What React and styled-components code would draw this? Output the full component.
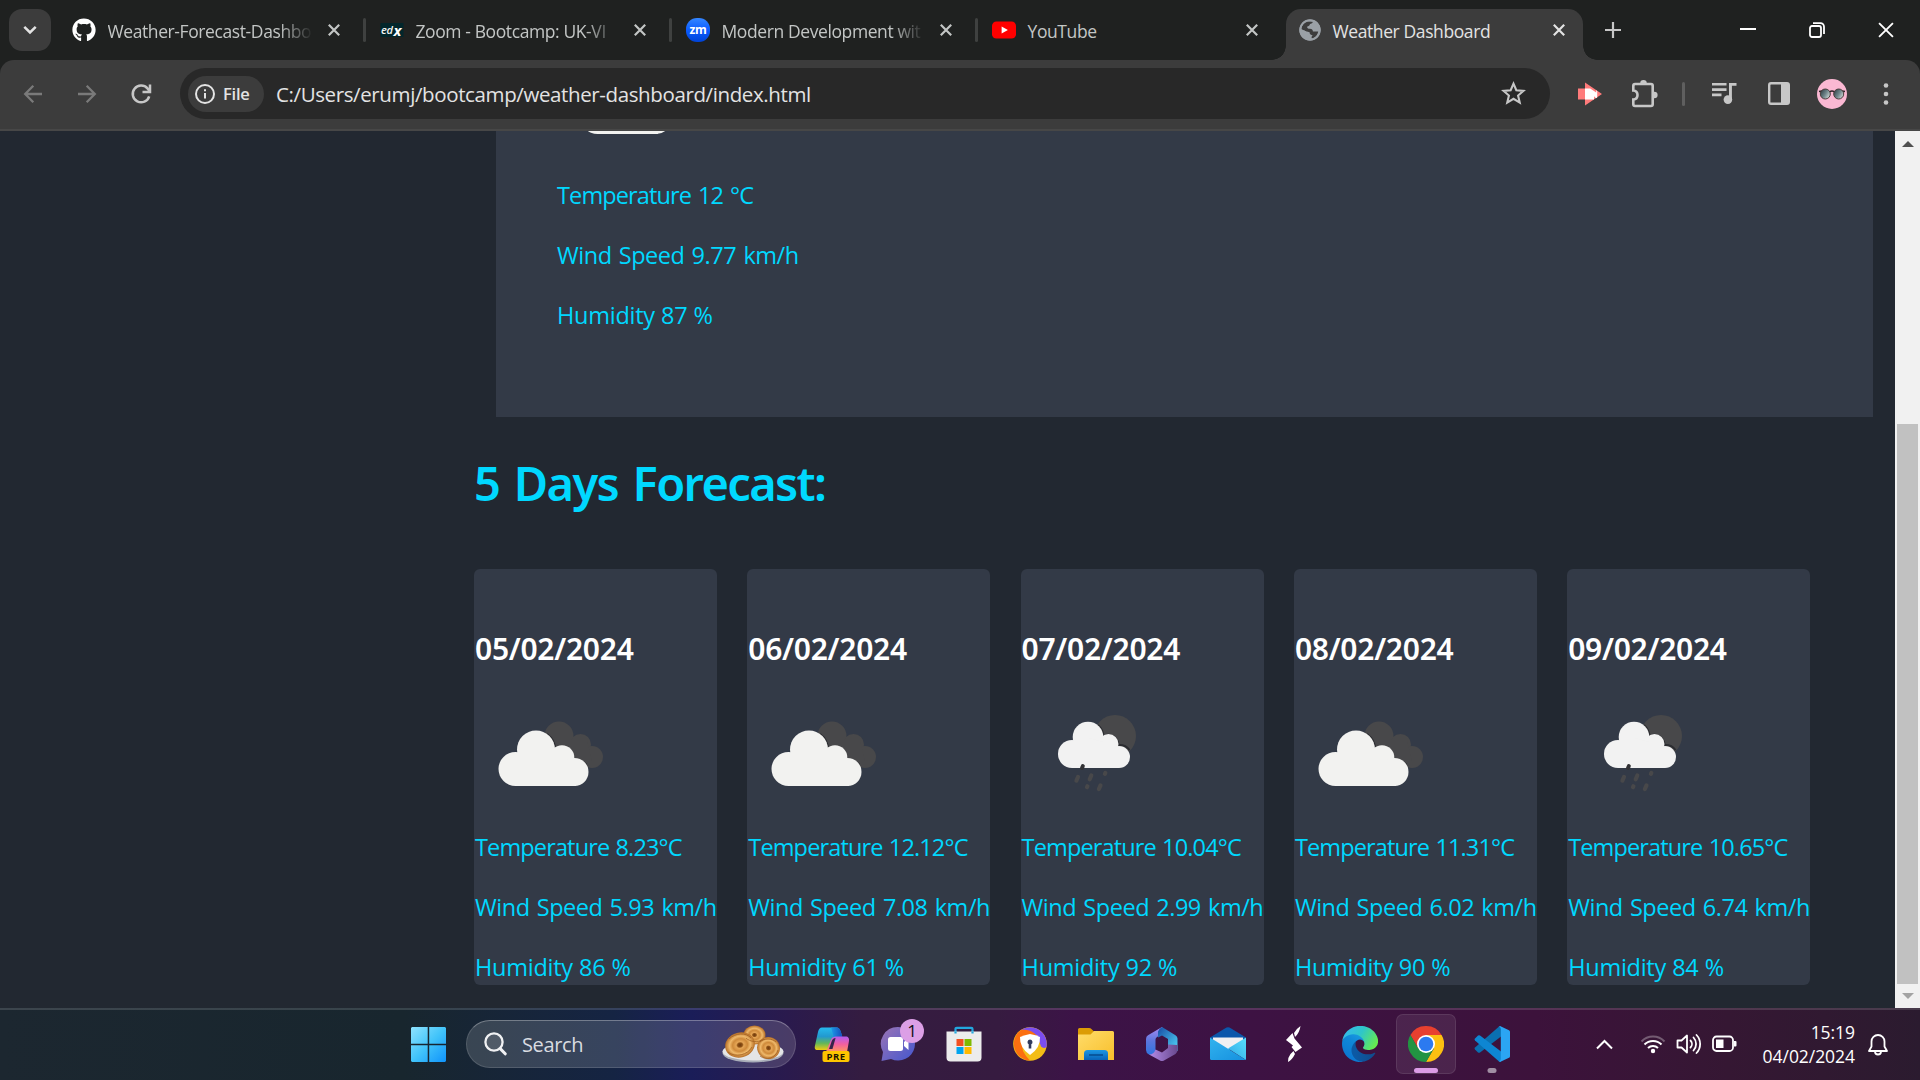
import React from "react";
import styled, { createGlobalStyle } from "styled-components";
import { FaGithub } from "react-icons/fa";

const GlobalStyle = createGlobalStyle`
  *, *::before, *::after { box-sizing: border-box; }
  html, body { margin: 0; padding: 0; overflow: hidden; background: #222831; }
  body { font-family: "Open Sans", "Noto Sans", sans-serif; }
  h2, h3, p { margin: 0; font-weight: 400; }
  button { border: 0; padding: 0; background: none; color: inherit; font: inherit; }
  svg { display: block; flex: none; }
`;

const Screen = styled.div`
  width: 1920px;
  height: 1080px;
  display: flex;
  flex-direction: column;
  overflow: hidden;
`;

/* ---------- Browser tab strip ---------- */

const TabStrip = styled.header`
  height: 60px;
  flex: none;
  display: flex;
  align-items: flex-end;
  padding-left: 9px;
  background: #1f2120;
  color: #c3c6c5;
`;

const TabSearchButton = styled.button`
  width: 42px;
  height: 42px;
  margin: 0 8px 9px 0;
  border-radius: 13px;
  background: #3c3c3c;
  display: grid;
  place-items: center;
`;

const Tab = styled.div`
  width: ${(p) => (p.$active ? 297 : 306)}px;
  height: 51px;
  margin-left: ${(p) => (p.$active ? "3px" : "0")};
  padding: 0 ${(p) => (p.$active ? 18 : 25)}px 9px ${(p) => (p.$active ? 13 : p.$first ? 13 : 15)}px;
  display: flex;
  align-items: center;
  gap: 11.5px;
  position: relative;
  border-radius: 15px 15px 0 0;
  background: ${(p) => (p.$active ? "#3c3c3c" : "transparent")};
  color: ${(p) => (p.$active ? "#e3e3e3" : "#c3c6c5")};

  &::before, &::after {
    content: "";
    display: ${(p) => (p.$active ? "block" : "none")};
    position: absolute;
    bottom: 0;
    width: 14px;
    height: 14px;
  }
  &::before {
    left: -14px;
    background: radial-gradient(circle at 0 0, transparent 13.5px, #3c3c3c 14px);
  }
  &::after {
    right: -14px;
    background: radial-gradient(circle at 100% 0, transparent 13.5px, #3c3c3c 14px);
  }
`;

const TabTitle = styled.span`
  flex: 1;
  min-width: 0;
  height: 25px;
  margin: 2px 4px 0 0;
  white-space: nowrap;
  font-size: 17.5px;
  line-height: 25px;
  letter-spacing: -0.4px;
  -webkit-mask-image: ${(p) => (p.$fade ? "linear-gradient(90deg, #000 calc(100% - 34px), transparent)" : "none")};
  mask-image: ${(p) => (p.$fade ? "linear-gradient(90deg, #000 calc(100% - 34px), transparent)" : "none")};
`;

const TabDivider = styled.span`
  width: 3px;
  height: 24px;
  margin: 0 -1px 18px -2px;
  border-radius: 2px;
  background: #3f4140;
`;

const NewTabButton = styled.button`
  width: 42px;
  height: 42px;
  margin: 0 0 9px 9px;
  display: grid;
  place-items: center;
`;

const WindowControls = styled.div`
  height: 60px;
  margin-left: auto;
  display: flex;
  color: #fff;
`;

const WindowButton = styled.button`
  width: 69px;
  height: 60px;
  display: grid;
  place-items: center;
`;

/* ---------- Browser toolbar ---------- */

const ToolbarBack = styled.div`
  flex: none;
  background: #1f2120;
`;

const Toolbar = styled.nav`
  height: 71px;
  display: flex;
  align-items: center;
  padding: 0 18px 2px 18px;
  border-bottom: 2px solid #474747;
  border-radius: 14px 14px 0 0;
  background: #3c3c3c;
  color: #c7c7c7;
`;

const NavButton = styled.button`
  width: 30px;
  height: 30px;
  margin-right: ${(p) => p.$gap}px;
  display: grid;
  place-items: center;
  color: ${(p) => (p.$disabled ? "#7a7a7a" : "#c7c7c7")};
`;

const Omnibox = styled.div`
  width: 1371px;
  height: 51px;
  padding: 0 24px 0 8px;
  display: flex;
  align-items: center;
  border-radius: 26px;
  background: #282828;
`;

const SiteChip = styled.span`
  width: 76px;
  height: 36px;
  padding-left: 7px;
  display: flex;
  align-items: center;
  gap: 8px;
  border-radius: 18px;
  background: #3c3c3c;
  color: #e3e3e3;
  font-size: 16.5px;
  font-weight: 600;
  letter-spacing: -0.2px;
`;

const Url = styled.span`
  flex: 1;
  margin-left: 12px;
  color: #e3e3e3;
  font-size: 20.5px;
  line-height: 30px;
  letter-spacing: -0.38px;
`;

const ToolbarActions = styled.div`
  margin-left: 27px;
  display: grid;
  grid-template-columns: 54px 51px 30px 56px 49px 53px 32px;
  align-items: center;
`;

const ToolbarDivider = styled.span`
  width: 3px;
  height: 24px;
  border-radius: 2px;
  background: #5f5f5f;
`;

const TrailingMenu = styled.span`
  margin-left: 13px;
`;

/* ---------- Page ---------- */

const Viewport = styled.div`
  height: 877px;
  flex: none;
  display: flex;
  background: #222831;
`;

const Sidebar = styled.aside`
  width: 474px;
  flex: none;
`;

const Content = styled.main`
  width: 1421px;
  flex: none;
`;

const CurrentPanel = styled.section`
  width: 1377px;
  height: 286px;
  margin-left: 22px;
  padding: 0 61px 84px;
  display: flex;
  flex-direction: column;
  justify-content: flex-end;
  gap: 24px;
  overflow: hidden;
  background: #333a47;
`;

const Metric = styled.p`
  color: #00d8ff;
  font-size: 23.5px;
  line-height: 36px;
  letter-spacing: ${(p) => p.$spacing}px;
  word-spacing: ${(p) => p.$words || 0}px;
  white-space: nowrap;
`;

const ForecastTitle = styled.h2`
  height: 58px;
  margin: 37px 0 57px;
  color: #00d8ff;
  font-family: "Noto Sans", sans-serif;
  font-size: 47px;
  font-weight: 600;
  line-height: 59px;
  letter-spacing: -1.65px;
  word-spacing: 4px;
`;

const Cards = styled.div`
  display: grid;
  grid-template-columns: repeat(5, 243px);
  gap: 30.3px;
`;

const Card = styled.article`
  height: 416px;
  padding: 57px 0 0 1px;
  display: flex;
  flex-direction: column;
  border-radius: 6px;
  background: #333a47;
`;

const CardDate = styled.h3`
  margin-bottom: 9px;
  color: #fff;
  font-family: "Noto Sans", sans-serif;
  font-size: 30px;
  font-weight: 600;
  line-height: 46px;
  height: 45px;
  letter-spacing: -0.27px;
`;

const Metrics = styled.div`
  margin-top: 24px;
  display: flex;
  flex-direction: column;
  gap: 24px;
`;

const Scrollbar = styled.div`
  width: 25px;
  padding: 0 2px;
  display: flex;
  flex-direction: column;
  background: #f1f1f1;
`;

const ScrollArrow = styled.div`
  height: ${(p) => p.$h}px;
  display: grid;
  place-items: center;
`;

const ScrollThumb = styled.div`
  height: 560px;
  margin-top: ${(p) => p.$offset}px;
  background: #c1c1c1;
`;

/* ---------- Taskbar ---------- */

const Taskbar = styled.footer`
  height: 72px;
  flex: none;
  padding-left: 411px;
  display: flex;
  align-items: center;
  border-top: 2px solid rgba(255, 255, 255, 0.14);
  background: linear-gradient(90deg, #1c2730 0%, #18262e 21%, #152443 32%, #1a1d58 36%, #2a1a4d 41%, #341c40 45%, #361b40 52%, #3c1347 56%, #3d1243 65%, #3c123b 80%, #351733 90%, #2b1b2f 100%);
  background-origin: border-box;
  color: #fff;
`;

const StartButton = styled.div`
  margin-top: -1px;
`;

const SearchBox = styled.div`
  width: 330px;
  height: 48px;
  margin: -2px 3px 0 20px;
  padding: 0 11px 0 17px;
  display: flex;
  align-items: center;
  border: 1.5px solid rgba(255, 255, 255, 0.13);
  border-top-color: rgba(255, 255, 255, 0.3);
  border-radius: 24px;
  background: rgba(255, 255, 255, 0.15);
`;

const SearchText = styled.span`
  flex: 1;
  margin: 0 0 0 15px;
  color: #d9dce1;
  font-size: 20px;
  letter-spacing: -0.35px;
`;

const TaskButton = styled.div`
  width: 60px;
  height: 60px;
  margin: -2px 3px 0;
  display: grid;
  place-items: center;
  position: relative;
  border-radius: 7px;
  border: ${(p) => (p.$active ? "1.5px solid rgba(255,255,255,.09)" : "0")};
  background: ${(p) => (p.$active ? "rgba(255,255,255,.08)" : "transparent")};
`;

const Indicator = styled.span`
  position: absolute;
  bottom: ${(p) => (p.$wide ? 0 : 1)}px;
  left: 50%;
  width: ${(p) => (p.$wide ? 24 : 9)}px;
  height: 5px;
  transform: translateX(-50%);
  border-radius: 3px;
  background: ${(p) => (p.$wide ? "#dc9ce6" : "#a08ea3")};
`;

const Badge = styled.span`
  position: absolute;
  top: 5px;
  right: 4px;
  width: 24px;
  height: 24px;
  border-radius: 50%;
  background: #dc9fe6;
  color: #111;
  font-size: 17px;
  line-height: 24px;
  text-align: center;
`;

const Tray = styled.div`
  margin: -2px 32px 0 auto;
  display: flex;
  align-items: center;
`;

const TrayItem = styled.span`
  margin-right: ${(p) => p.$gap}px;
`;

const Clock = styled.div`
  width: 96px;
  margin: -1px 13px 0 0;
  text-align: right;
  font-size: 17.5px;
  line-height: 24px;
  letter-spacing: -0.05px;
  white-space: nowrap;
`;

/* ---------- Drawings ---------- */

const CloseIcon = ({ size = 12, width = 2.2 }) => (
  <svg width={size} height={size} viewBox="0 0 12 12" fill="none" stroke="currentColor" strokeWidth={width}>
    <path d="M.8.8l10.4 10.4M11.2.8L.8 11.2" />
  </svg>
);

const EdxIcon = () => (
  <svg width="24" height="24" viewBox="0 0 24 24">
    <rect x="0.5" y="5" width="23" height="14" fill="#02262b" />
    <text x="1" y="15.5" fontFamily="Open Sans" fontWeight="600" fontStyle="italic" fontSize="11" letterSpacing="-.4" fill="#f3f5f5">ed</text>
    <text x="13.5" y="18" fontFamily="Open Sans" fontWeight="700" fontStyle="italic" fontSize="15" fill="#fff">x</text>
  </svg>
);

const ZoomIcon = () => (
  <svg width="24" height="24" viewBox="0 0 24 24">
    <defs><linearGradient id="zm" x2="0" y2="1"><stop stopColor="#3486ff" /><stop offset=".5" stopColor="#0b5cff" /><stop offset="1" stopColor="#0043d6" /></linearGradient></defs>
    <rect width="24" height="24" rx="11" fill="url(#zm)" />
    <text x="12" y="15.6" textAnchor="middle" fontFamily="Open Sans" fontWeight="700" fontSize="12" letterSpacing="-.4" fill="#fff">zm</text>
  </svg>
);

const YouTubeIcon = () => (
  <svg width="24" height="24" viewBox="0 0 24 24">
    <rect y="3.4" width="24" height="17.2" rx="4.4" fill="#f00" />
    <path d="M9.6 8.4v7.2l6.3-3.6z" fill="#fff" />
  </svg>
);

const GlobeIcon = () => (
  <svg width="22" height="22" viewBox="0 0 22 22">
    <circle cx="11" cy="11" r="10.6" fill="#9aa0a6" />
    <path d="M8 2.3c2 .3 4.5 0 6 .1-.3 1.7-1.6 1.9-3 2.6-.2 1.8-1.4 2.3-3 2.7.4 1.6.8 2 2.8 2 2.2 0 3.1 1.3 3.1 2.7 1.5.2 3.6.1 5.4.2a8.7 8.7 0 0 1-6.4 6.9c-.6-1.2-.3-2.3.8-3.2-1.6-.4-3.1-.7-3.1-3 -2-.4-5.500-1.100-8.200-3.200 .5-3.900 2.700-6.600 5.600-7.800z" fill="#3c3c3c" />
    <path d="M2.300 11c2.100.2 4.500.5 5.200 2.200.6 1.800 2.800 1.900 3 3.500.1 1.100-.3 2-.6 3.100-4.200-.5-7.400-4.200-7.600-8.800z" fill="#9aa0a6" />
    <circle cx="11" cy="11" r="9.8" fill="none" stroke="#9aa0a6" strokeWidth="1.9" />
  </svg>
);

const ArrowIcon = ({ right }) => (
  <svg width="20" height="20" viewBox="0 0 20 20" fill="none" stroke="currentColor" strokeWidth="2.3" transform={right ? "scale(-1 1)" : undefined}>
    <path d="M19 10H2.500M10.300 1.800L2.200 10l8.100 8.200" />
  </svg>
);

const ReloadIcon = () => (
  <svg width="22" height="22" viewBox="0 0 22 22" fill="none" stroke="currentColor" strokeWidth="2.5">
    <path d="M19.200 13.300A8.400 8.400 0 1 1 17.500 5.400L19.500 8" />
    <path d="M20 1.500V8.900h-7.500" />
  </svg>
);

const StarIcon = () => (
  <svg width="25" height="25" viewBox="0 0 24 24" fill="none" stroke="#c7c7c7" strokeWidth="2">
    <path d="M12 2.600l2.700 6.300 6.900.6-5.200 4.500 1.600 6.700-6-3.600-6 3.600 1.600-6.700-5.200-4.500 6.900-.6z" />
  </svg>
);

const RecorderIcon = () => (
  <svg width="25" height="24" viewBox="0 0 25 24">
    <path d="M1 6.500h7V0.500L25 12 8 23.500v-6H1z" fill="#ff7b7b" />
    <path d="M8 6.500h5.200l6 4V8.300l1 .8v6.500l-1.200.6-2-2v3.300H8z" fill="#fff" />
  </svg>
);

const PuzzleIcon = () => (
  <svg width="27" height="30" viewBox="0 0 27 30">
    <circle cx="12.500" cy="4.300" r="3.300" fill="#c7c7c7" />
    <circle cx="23.300" cy="16" r="3.300" fill="#c7c7c7" />
    <path d="M4 5h16a1.700 1.700 0 0 1 1.700 1.700v18.600A1.700 1.700 0 0 1 20 27H4a1.700 1.700 0 0 1-1.700-1.700V20.500c2.600-.2 4.200-2 4.200-4.500s-1.600-4.300-4.200-4.500V6.700A1.700 1.700 0 0 1 4 5z" fill="#3c3c3c" stroke="#c7c7c7" strokeWidth="2.600" />
  </svg>
);

const PlaylistIcon = () => (
  <svg width="25" height="23" viewBox="0 0 25 23" fill="#c7c7c7">
    <path d="M0 1h14.500v2.600H0zM0 6.300h14.500v2.600H0zM0 11.600h9.500v2.600H0zM17 1h7.500v2.800h-4.600V18H17z" />
    <circle cx="15.900" cy="17.600" r="4.300" />
  </svg>
);

const SidePanelIcon = () => (
  <svg width="22" height="23" viewBox="0 0 22 23">
    <rect x="1.200" y="1.200" width="19.600" height="20.600" rx="1.800" fill="none" stroke="#c7c7c7" strokeWidth="2.400" />
    <path d="M13 1h8v21h-8z" fill="#c7c7c7" />
  </svg>
);

const AvatarIcon = () => (
  <svg width="30" height="30" viewBox="0 0 30 30">
    <defs><linearGradient id="lens" x1="0" y1="0" x2="1" y2=".6"><stop stopColor="#26343b" /><stop offset=".6" stopColor="#71878c" /><stop offset="1" stopColor="#c6d0cf" /></linearGradient></defs>
    <circle cx="15" cy="15" r="15" fill="#fbb8d3" />
    <path d="M2 12.500l3-.5M28 12.500l-3-.5M12.500 13q2.500-1.800 5 0" stroke="#2b2226" strokeWidth="1.500" fill="none" />
    <circle cx="8.300" cy="15" r="5" fill="url(#lens)" stroke="#4b3d3c" strokeWidth="1" />
    <circle cx="21.700" cy="15" r="5" fill="url(#lens)" stroke="#4b3d3c" strokeWidth="1" />
  </svg>
);

const MenuDots = () => (
  <svg width="6" height="22" viewBox="0 0 6 22" fill="#c7c7c7">
    <circle cx="3" cy="2.500" r="2.300" /><circle cx="3" cy="11" r="2.300" /><circle cx="3" cy="19.500" r="2.300" />
  </svg>
);

const CloudyIcon = () => (
  <svg width="150" height="125" viewBox="0 0 150 125">
    <g fill="#48484a"><circle cx="84" cy="56" r="14.500" /><circle cx="105.500" cy="64.500" r="10.500" /><circle cx="117" cy="77" r="11" /><path d="M76 60h36l5 22H80z" /></g>
    <g fill="none" stroke="#2c2d31" strokeWidth="2"><path d="M72 54q8 6 8 15 8-4 14 1 4 4 4.500 9 8 0 13 6" /></g>
    <g fill="#f2f2f0"><circle cx="40.500" cy="89" r="17" /><circle cx="61" cy="69.500" r="19" /><circle cx="87" cy="77.500" r="12.300" /><circle cx="99.500" cy="92" r="14" /><path d="M44 70h18l18 4 16 8 5 24H40.500z" /></g>
  </svg>
);

const RainIcon = () => (
  <svg width="150" height="125" viewBox="0 0 150 125">
    <circle cx="93" cy="56" r="21" fill="#48484a" />
    <g fill="none" stroke="#2c2d31" strokeWidth="2"><path d="M76 45q5 5 5.500 11 6-3 11 1 4 4 4 8 7-.5 11 5" /></g>
    <g fill="#f2f2f2"><circle cx="50" cy="74" r="14" /><circle cx="66" cy="57" r="15.300" /><circle cx="86.500" cy="64" r="10" /><circle cx="97" cy="77" r="11" /><path d="M52 58h15l14 4 12 6 4 20H50z" /></g>
    <path d="M60.800 86.200l-.8 1.800" stroke="#323235" strokeWidth="4" strokeLinecap="round" />
    <path d="M56 97l-1.600 3.600M69.300 95.500l-1.600 3.800M83.300 93l-.4.900M65.400 106.300l-.4.900M78.500 105.400l-1.600 3.600" stroke="#48484a" strokeWidth="4.200" strokeLinecap="round" />
  </svg>
);

const StartIcon = () => (
  <svg width="35" height="35" viewBox="0 0 35 35">
    <defs><linearGradient id="win" gradientUnits="userSpaceOnUse" x1="0" y1="0" x2="35" y2="35"><stop stopColor="#8fe3ff" /><stop offset=".5" stopColor="#42c4fa" /><stop offset="1" stopColor="#0f93fb" /></linearGradient></defs>
    <path fill="url(#win)" d="M1 0h15.700v16.700H0V1zM18.200 0H34l1 1v15.700H18.200zM0 18.200h16.700V35H1l-1-1zM18.200 18.200H35V34l-1 1H18.200z" />
  </svg>
);

const MagnifierIcon = () => (
  <svg width="23" height="24" viewBox="0 0 23 24" fill="none" stroke="#f0f1f3" strokeWidth="2.300" strokeLinecap="round">
    <circle cx="10" cy="10" r="8.600" fill="rgba(255,255,255,.12)" /><path d="M16.200 16.600l5 5.200" strokeWidth="3" />
  </svg>
);

const PastryIcon = () => (
  <svg width="62" height="38" viewBox="0 0 62 38">
    <defs><radialGradient id="bun"><stop stopColor="#6b380d" /><stop offset=".16" stopColor="#8f5216" /><stop offset=".26" stopColor="#e5a656" /><stop offset=".5" stopColor="#cf8a3a" /><stop offset=".7" stopColor="#efb96b" /><stop offset="1" stopColor="#b56d25" /></radialGradient></defs>
    <ellipse cx="31" cy="28" rx="30.500" ry="9.500" fill="#a8adb8" />
    <ellipse cx="31" cy="26.500" rx="30.500" ry="9" fill="#e4e5e6" />
    <ellipse cx="32.500" cy="10" rx="11" ry="9.500" fill="url(#bun)" />
    <ellipse cx="18" cy="20" rx="15" ry="12.500" fill="url(#bun)" transform="rotate(-15 18 20)" />
    <ellipse cx="46.500" cy="23" rx="11.500" ry="11" fill="url(#bun)" transform="rotate(25 46.500 23)" />
    <g fill="none" stroke="#9c5b1c" strokeWidth=".9" opacity=".8">
      <path d="M6 27c7 6 20 3 24-5M7 14c6-6 17-7 22-1M24 13c4 4 12 5 18 1M38 31c6 5 16 2 18-6M38 17c4-4 12-4 16 0" />
    </g>
  </svg>
);

const CopilotIcon = () => (
  <svg width="36" height="36" viewBox="0 0 36 36">
    <defs>
      <linearGradient id="cpA" x2="0" y2="1"><stop stopColor="#26b9ee" /><stop offset=".4" stopColor="#2299cf" /><stop offset=".7" stopColor="#62b65a" /><stop offset="1" stopColor="#f0cc12" /></linearGradient>
      <linearGradient id="cpB" x2="0" y2="1"><stop stopColor="#b35cf0" /><stop offset=".5" stopColor="#f2609f" /><stop offset="1" stopColor="#ff9a5a" /></linearGradient>
      <linearGradient id="cpC"><stop stopColor="#1c9be8" /><stop offset="1" stopColor="#164bbd" /></linearGradient>
    </defs>
    <path d="M8 1.500h14c3 0 4 1.500 5 5l1.300 4h-5c-2.800 0-4.300 1.600-5.200 4.700L15 24H3.500C.8 24 .4 22 1 19.500L4 6c.8-3 1.800-4.500 4-4.500z" fill="url(#cpA)" />
    <path d="M17 1.500h5c3 0 4 1.500 5 5l1.300 4h-5c-1.500 0-2.600.5-3.500 1.400L18 5c-.4-1.700-.8-2.800-1-3.500z" fill="url(#cpC)" />
    <path d="M25 10.500h6.500c3 0 4 2 3.400 5L33 26H9c2 0 3.500-.6 4.300-3l3.500-9c1-2.600 3-3.500 5.200-3.500z" fill="url(#cpB)" />
    <path d="M15 23l2.600-7.500c.8-2.200 1.800-3.200 4-3.500L18.500 23z" fill="#36234a" />
    <rect x="8.500" y="25" width="27" height="11" rx="2" fill="#fdc500" />
    <text x="22" y="34" textAnchor="middle" fontFamily="Open Sans" fontWeight="700" fontSize="9.500" letterSpacing=".5" fill="#1d1600">PRE</text>
  </svg>
);

const ChatIcon = () => (
  <svg width="36" height="36" viewBox="0 0 36 36">
    <defs><linearGradient id="chat" x2="1" y2="1"><stop stopColor="#9b74b5" /><stop offset="1" stopColor="#4457cf" /></linearGradient></defs>
    <path d="M18 1a16.800 16.800 0 1 1-7 32L1.500 35 3 26A16.800 16.800 0 0 1 18 1z" fill="url(#chat)" />
    <rect x="8" y="11" width="15" height="14" rx="2.500" fill="#fff" />
    <path d="M24 16l4.500-4v12L24 20z" fill="#fff" />
  </svg>
);

const StoreIcon = () => (
  <svg width="36" height="36" viewBox="0 0 36 36">
    <path d="M9.500 7.500V3q0-1.200 1.200-1.200h14.600q1.200 0 1.200 1.200v4.500" fill="none" stroke="#22a7de" strokeWidth="2.200" />
    <path d="M.5 5.500h35v26a4 4 0 0 1-4 4h-27a4 4 0 0 1-4-4z" fill="#ececec" />
    <path d="M9.500 5.500v2M26.500 5.500v2" stroke="#22a7de" strokeWidth="2.200" />
    <path d="M10.500 13h7v7h-7z" fill="#f25022" /><path d="M18.500 13h7v7h-7z" fill="#7fba00" />
    <path d="M10.500 21h7v7h-7z" fill="#00a4ef" /><path d="M18.500 21h7v7h-7z" fill="#ffb900" />
  </svg>
);

const SecureBrowserIcon = () => (
  <svg width="36" height="36" viewBox="0 0 36 36">
    <circle cx="18" cy="18" r="16.800" fill="#f3bd16" />
    <path d="M18 1.200A16.800 16.800 0 0 1 34.500 21q-3 2-5.500-.5L25 9 12 7.500 9 4q4-2.800 9-2.800z" fill="#7b4df0" />
    <path d="M9 4C16 3 22 6 25 10L9 12l2 13q3 6 7 9.500A16.800 16.800 0 0 1 9 4z" fill="#fb6f10" />
    <path d="M8 11q5-2 10-3 6 .8 10 3 .5 11-10 18Q7.500 22 8 11z" fill="#fff" />
    <path d="M18 13.500a2.600 2.600 0 0 1 1.300 4.800V22.500h-2.600v-4.200A2.600 2.600 0 0 1 18 13.500z" fill="#313a5c" />
  </svg>
);

const FolderIcon = () => (
  <svg width="36" height="36" viewBox="0 0 36 36">
    <defs><linearGradient id="fold" x2="1" y2="1"><stop stopColor="#ffdc6a" /><stop offset="1" stopColor="#f8bf2b" /></linearGradient><linearGradient id="foldB" x2="0" y2="1"><stop stopColor="#1c97e3" /><stop offset="1" stopColor="#0863b9" /></linearGradient></defs>
    <path d="M0 3.500Q0 2 1.500 2h9.500q1.500 0 2.700 1.200L16.500 6v5H0z" fill="#dc9c05" />
    <path d="M0 8.500h12.500L16 5h18.500Q36 5 36 6.500V34H0z" fill="url(#fold)" />
    <path d="M6 34V27.500Q6 24 9.500 24h17q3.500 0 3.500 3.500V34z" fill="url(#foldB)" />
    <path d="M11 29h14" stroke="#064b8f" strokeWidth="1.500" />
  </svg>
);

const OfficeIcon = () => (
  <svg width="36" height="36" viewBox="0 0 36 36">
    <defs>
      <linearGradient id="ofA" x2="0" y2="1"><stop stopColor="#a68af2" /><stop offset=".5" stopColor="#5b76dd" /><stop offset="1" stopColor="#2f74df" /></linearGradient>
      <linearGradient id="ofB" x2="1" y2="1"><stop stopColor="#164aa3" /><stop offset="1" stopColor="#52d9fb" /></linearGradient>
      <linearGradient id="ofC"><stop stopColor="#b48be8" /><stop offset="1" stopColor="#68498e" /></linearGradient>
    </defs>
    <path d="M18 1L4 9.200Q2 10.500 2 13v11q0 3 3 4.600 4 1 6.500-2.600V13.500Q11.500 12 13 11l7-4Q20 3 18 1z" fill="url(#ofA)" />
    <path d="M18 1q-3 1.500-4 4.500v6L18 9.500l6 3.500v9l9.500 3V12.500q0-2-2-3.300z" fill="url(#ofB)" />
    <path d="M5 28.600l11 6q2 1 4 0L31.500 28q2-1.300 2-4v-5L24 18.500V22l-6 4.500-6.500-3Q10 28.500 5 28.600z" fill="url(#ofC)" />
  </svg>
);

const MailIcon = () => (
  <svg width="36" height="36" viewBox="0 0 36 36">
    <defs><linearGradient id="mailA" x2="1" y2="1"><stop stopColor="#32b3ee" /><stop offset="1" stopColor="#1590df" /></linearGradient><linearGradient id="mailB" x1="1" y1="0" x2="0" y2="1"><stop stopColor="#58ddfc" /><stop offset="1" stopColor="#2fa9e6" /></linearGradient></defs>
    <path d="M0 11.500L16.500 1.600q1.500-.8 3 0L36 11.500 18 25z" fill="#0b57ab" />
    <path d="M3 11.500h30v4L18 24 3 15.500z" fill="#f0f0f2" />
    <path d="M36 11.500V34L18 22.500z" fill="url(#mailB)" />
    <path d="M0 11.500L36 34H1.500Q0 34 0 32.500z" fill="url(#mailA)" />
  </svg>
);

const SwiftIcon = () => (
  <svg width="36" height="36" viewBox="0 0 36 36" fill="#fff">
    <path d="M24.500 0q-1 7-5.500 11l-1-4Q20 3 24.500 0zM16.500 7l2 5.500L26 21.500 19.500 26 15.500 21 17 19.500 10 14zM17.500 25l1.500 3Q16 34 12 36q0-5 2.500-8z" />
  </svg>
);

const EdgeIcon = () => (
  <svg width="36" height="36" viewBox="0 0 256 256">
    <defs>
      <linearGradient id="egA" x1=".2" x2="1"><stop stopColor="#0c59a4" /><stop offset="1" stopColor="#114a8b" /></linearGradient>
      <linearGradient id="egB" x1=".8" y1="0" x2=".3" y2="1"><stop stopColor="#1b9de2" /><stop offset=".4" stopColor="#0f86d8" /><stop offset="1" stopColor="#0b74cf" /></linearGradient>
      <linearGradient id="egC" x1="0" y1=".2" x2="1" y2=".6"><stop stopColor="#35b8f1" /><stop offset=".5" stopColor="#2fc6c8" /><stop offset="1" stopColor="#66eb4f" /></linearGradient>
    </defs>
    <path fill="url(#egA)" d="M231 190.500c-3.400 1.800-6.900 3.400-10.500 4.700a101.500 101.500 0 0 1-35.900 6.400c-47.300 0-88.500-32.500-88.500-74.300 0-11.400 6.400-21.900 16.400-27.300-42.800 1.800-53.800 46.400-53.800 72.500 0 74 68.100 81.400 82.800 81.400 7.900 0 19.800-2.300 27-4.600l1.300-.4a128.300 128.300 0 0 0 66.600-52.800 4 4 0 0 0-5.400-5.600z" />
    <path fill="url(#egB)" d="M105.700 241.400a79.200 79.200 0 0 1-22.700-21.300 80.700 80.700 0 0 1 29.500-120c3.200-1.500 8.500-4.100 15.600-4a32.400 32.400 0 0 1 25.700 13 31.900 31.900 0 0 1 6.300 18.700c0-.2 24.500-79.600-80-79.600-43.900 0-80 41.600-80 78.200 0 19.300 4.200 38.500 12.100 56.100a128 128 0 0 0 156.400 67 75.500 75.500 0 0 1-62.800-8z" />
    <path fill="url(#egC)" d="M152.300 148.900c-.9 1-3.400 2.500-3.400 5.600 0 2.600 1.700 5.200 4.800 7.300 14.400 10.100 41.700 8.700 41.800 8.700 10.700 0 21.200-2.900 30.500-8.300a61.800 61.800 0 0 0 30.500-53.300c.3-22.400-8-37.300-11.300-43.900C223.900 23.200 177.700-.9 127.500-.9A128 128 0 0 0-.5 125.300c.5-36.500 36.800-66 80-66 3.500 0 23.500.3 42 10.100 16.300 8.600 24.900 18.900 30.800 29.200 6.200 10.600 7.300 24.100 7.300 29.400 0 5.400-2.700 13.300-7.300 20.900z" />
  </svg>
);

const ChromeIcon = () => (
  <svg width="36" height="36" viewBox="0 0 36 36">
    <path d="M2.410 9A18 18 0 0 1 33.590 9H18v9l-7.800 4.500z" fill="#e8402f" />
    <path d="M33.590 9A18 18 0 0 1 18 36l7.800-13.500L18 18V9z" fill="#fcc011" />
    <path d="M18 36A18 18 0 0 1 2.410 9l7.790 13.500L18 18l7.800 4.500z" fill="#229342" />
    <circle cx="18" cy="18" r="9" fill="#fff" /><circle cx="18" cy="18" r="7.300" fill="#2c7af0" />
  </svg>
);

const CodeIcon = () => (
  <svg width="36" height="36" viewBox="0 0 36 36">
    <path d="M1 23.500l3 2.900q1 .8 2 .1L27 10.500V0l-2.500 1L1 21.500q-1 1 0 2z" fill="#0a6fb0" />
    <path d="M1 12.500l3-2.900q1-.8 2-.1L27 25.500V36l-2.500-1L1 14.500q-1-1 0-2z" fill="#0e86d2" />
    <path d="M24.500 35q1 1 2.500.5l8-3.700q1-.5 1-1.600V5.800q0-1.100-1-1.600L27 .5Q25.500 0 24.500 1q2.300-.5 2.300 2v30q0 2.500-2.300 2z" fill="#2ba5f3" />
  </svg>
);

const WifiIcon = () => (
  <svg width="26" height="20" viewBox="0 0 26 20" fill="none" stroke="#fff" strokeWidth="2">
    <path d="M1.500 7.500a16 16 0 0 1 23 0" opacity=".3" />
    <path d="M4.500 10.500a12 12 0 0 1 17 0M8 14a7.200 7.200 0 0 1 10 0" /><circle cx="13" cy="17" r="2.200" fill="#fff" stroke="none" />
  </svg>
);

const VolumeIcon = () => (
  <svg width="26" height="22" viewBox="0 0 26 22" fill="none" stroke="#fff" strokeWidth="1.800" strokeLinejoin="round" strokeLinecap="round">
    <path d="M1.500 7.500h4L11 2.500v17l-5.500-5h-4z" /><path d="M14.500 7.500a5 5 0 0 1 0 7M17.500 4.500a9.500 9.500 0 0 1 0 13M20.500 2a13 13 0 0 1 0 18" />
  </svg>
);

const BatteryIcon = () => (
  <svg width="25" height="18" viewBox="0 0 25 18">
    <rect x="1" y="1.500" width="20" height="14.500" rx="3.500" fill="none" stroke="#fff" strokeWidth="1.800" />
    <path d="M4 4.500h7.500V13H4z" fill="#fff" /><path d="M22 6h1.500q1 0 1 1v3.500q0 1-1 1H22z" fill="#fff" />
  </svg>
);

const BellIcon = () => (
  <svg width="20" height="23" viewBox="0 0 20 23" fill="none" stroke="#fff" strokeWidth="1.800" strokeLinejoin="round">
    <path d="M3.500 8.500a6.500 6.500 0 0 1 13 0v5L19 18H1l2.500-4.500zM7 18.500a3 3 0 0 0 6 0" />
  </svg>
);

/* ---------- Data ---------- */

const tabs = [
  { title: "Weather-Forecast-Dashbo", icon: <FaGithub size={24} color="#fff" />, fade: true },
  { title: "Zoom - Bootcamp: UK-VI", icon: <EdxIcon />, fade: true },
  { title: "Modern Development wit", icon: <ZoomIcon />, fade: true },
  { title: "YouTube", icon: <YouTubeIcon /> },
];

const forecast = [
  { date: "05/02/2024", temp: "8.23", wind: "5.93", humidity: 86, Icon: CloudyIcon },
  { date: "06/02/2024", temp: "12.12", wind: "7.08", humidity: 61, Icon: CloudyIcon },
  { date: "07/02/2024", temp: "10.04", wind: "2.99", humidity: 92, Icon: RainIcon },
  { date: "08/02/2024", temp: "11.31", wind: "6.02", humidity: 90, Icon: CloudyIcon },
  { date: "09/02/2024", temp: "10.65", wind: "6.74", humidity: 84, Icon: RainIcon },
];

const apps = [
  { name: "copilot", Icon: CopilotIcon },
  { name: "chat", Icon: ChatIcon, badge: 1 },
  { name: "store", Icon: StoreIcon },
  { name: "secure", Icon: SecureBrowserIcon },
  { name: "files", Icon: FolderIcon },
  { name: "office", Icon: OfficeIcon },
  { name: "mail", Icon: MailIcon },
  { name: "swift", Icon: SwiftIcon },
  { name: "edge", Icon: EdgeIcon },
  { name: "chrome", Icon: ChromeIcon, active: true },
  { name: "code", Icon: CodeIcon, running: true },
];

export default function App() {
  return (
    <Screen>
      <GlobalStyle />
      <TabStrip>
        <TabSearchButton>
          <svg width="14" height="10" viewBox="0 0 14 10" fill="none" stroke="#e3e3e3" strokeWidth="2.500"><path d="M1.300 1.800L7 7.500l5.700-5.700" /></svg>
        </TabSearchButton>
        {tabs.map((t, i) => (
          <React.Fragment key={t.title}>
            <Tab $first={i === 0}>
              {t.icon}
              <TabTitle $fade={t.fade}>{t.title}</TabTitle>
              <CloseIcon />
            </Tab>
            {i < tabs.length - 1 && <TabDivider />}
          </React.Fragment>
        ))}
        <Tab $active>
          <GlobeIcon />
          <TabTitle>Weather Dashboard</TabTitle>
          <CloseIcon />
        </Tab>
        <NewTabButton>
          <svg width="16" height="16" viewBox="0 0 16 16" stroke="#c7c7c7" strokeWidth="2.200"><path d="M8 0v16M0 8h16" /></svg>
        </NewTabButton>
        <WindowControls>
          <WindowButton><svg width="16" height="4" viewBox="0 0 16 4"><path d="M0 0h16v2H0z" fill="#fff" /></svg></WindowButton>
          <WindowButton>
            <svg width="16" height="16" viewBox="0 0 16 16" fill="none" stroke="#fff" strokeWidth="1.800"><rect x="1" y="4" width="11" height="11" rx="2" /><path d="M4 1.200h7.500a3.500 3.500 0 0 1 3.500 3.500V12" /></svg>
          </WindowButton>
          <WindowButton><CloseIcon size={16} width={1.400} /></WindowButton>
        </WindowControls>
      </TabStrip>

      <ToolbarBack>
        <Toolbar>
          <NavButton $disabled $gap={24}><ArrowIcon /></NavButton>
          <NavButton $disabled $gap={24}><ArrowIcon right /></NavButton>
          <NavButton $gap={24}><ReloadIcon /></NavButton>
          <Omnibox>
            <SiteChip>
              <svg width="20" height="20" viewBox="0 0 20 20" fill="none" stroke="#e3e3e3" strokeWidth="2"><circle cx="10" cy="10" r="9" /><path d="M10 9v5.500M10 5.300v2" /></svg>
              File
            </SiteChip>
            <Url>C:/Users/erumj/bootcamp/weather-dashboard/index.html</Url>
            <StarIcon />
          </Omnibox>
          <ToolbarActions>
            <RecorderIcon />
            <PuzzleIcon />
            <ToolbarDivider />
            <PlaylistIcon />
            <SidePanelIcon />
            <AvatarIcon />
            <TrailingMenu><MenuDots /></TrailingMenu>
          </ToolbarActions>
        </Toolbar>
      </ToolbarBack>

      <Viewport>
        <Sidebar />
        <Content>
          <CurrentPanel>
            <CloudyIcon />
            <Metric $spacing={-0.88} $words={1.7}>Temperature 12 °C</Metric>
            <Metric $spacing={-0.46} $words={1.5}>Wind Speed 9.77 km/h</Metric>
            <Metric $spacing={-0.26} $words={0.3}>Humidity 87 %</Metric>
          </CurrentPanel>
          <ForecastTitle>5 Days Forecast:</ForecastTitle>
          <Cards>
            {forecast.map(({ date, temp, wind, humidity, Icon }) => (
              <Card key={date}>
                <CardDate>{date}</CardDate>
                <Icon />
                <Metrics>
                  <Metric $spacing={-0.86} $words={1}>Temperature {temp}°C</Metric>
                  <Metric $spacing={-0.46} $words={1.5}>Wind Speed {wind} km/h</Metric>
                  <Metric $spacing={-0.26} $words={0.3}>Humidity {humidity} %</Metric>
                </Metrics>
              </Card>
            ))}
          </Cards>
        </Content>
        <Scrollbar>
          <ScrollArrow $h={26}><svg width="12" height="6" viewBox="0 0 12 6"><path d="M0 6l6-6 6 6z" fill="#505050" /></svg></ScrollArrow>
          <ScrollThumb $offset={267} />
          <ScrollArrow $h={24}><svg width="12" height="6" viewBox="0 0 12 6"><path d="M0 0l6 6 6-6z" fill="#a3a3a3" /></svg></ScrollArrow>
        </Scrollbar>
      </Viewport>

      <Taskbar>
        <StartButton><StartIcon /></StartButton>
        <SearchBox>
          <MagnifierIcon />
          <SearchText>Search</SearchText>
          <PastryIcon />
        </SearchBox>
        {apps.map(({ name, Icon, badge, active, running }) => (
          <TaskButton key={name} $active={active}>
            <Icon />
            {badge && <Badge>{badge}</Badge>}
            {(active || running) && <Indicator $wide={active} />}
          </TaskButton>
        ))}
        <Tray>
          <TrayItem $gap={27}><svg width="17" height="11" viewBox="0 0 17 11" fill="none" stroke="#fff" strokeWidth="2"><path d="M1 9.500l7.500-7.500L16 9.500" /></svg></TrayItem>
          <TrayItem $gap={10}><WifiIcon /></TrayItem>
          <TrayItem $gap={10}><VolumeIcon /></TrayItem>
          <TrayItem $gap={22}><BatteryIcon /></TrayItem>
          <Clock>15:19<br />04/02/2024</Clock>
          <BellIcon />
        </Tray>
      </Taskbar>
    </Screen>
  );
}
